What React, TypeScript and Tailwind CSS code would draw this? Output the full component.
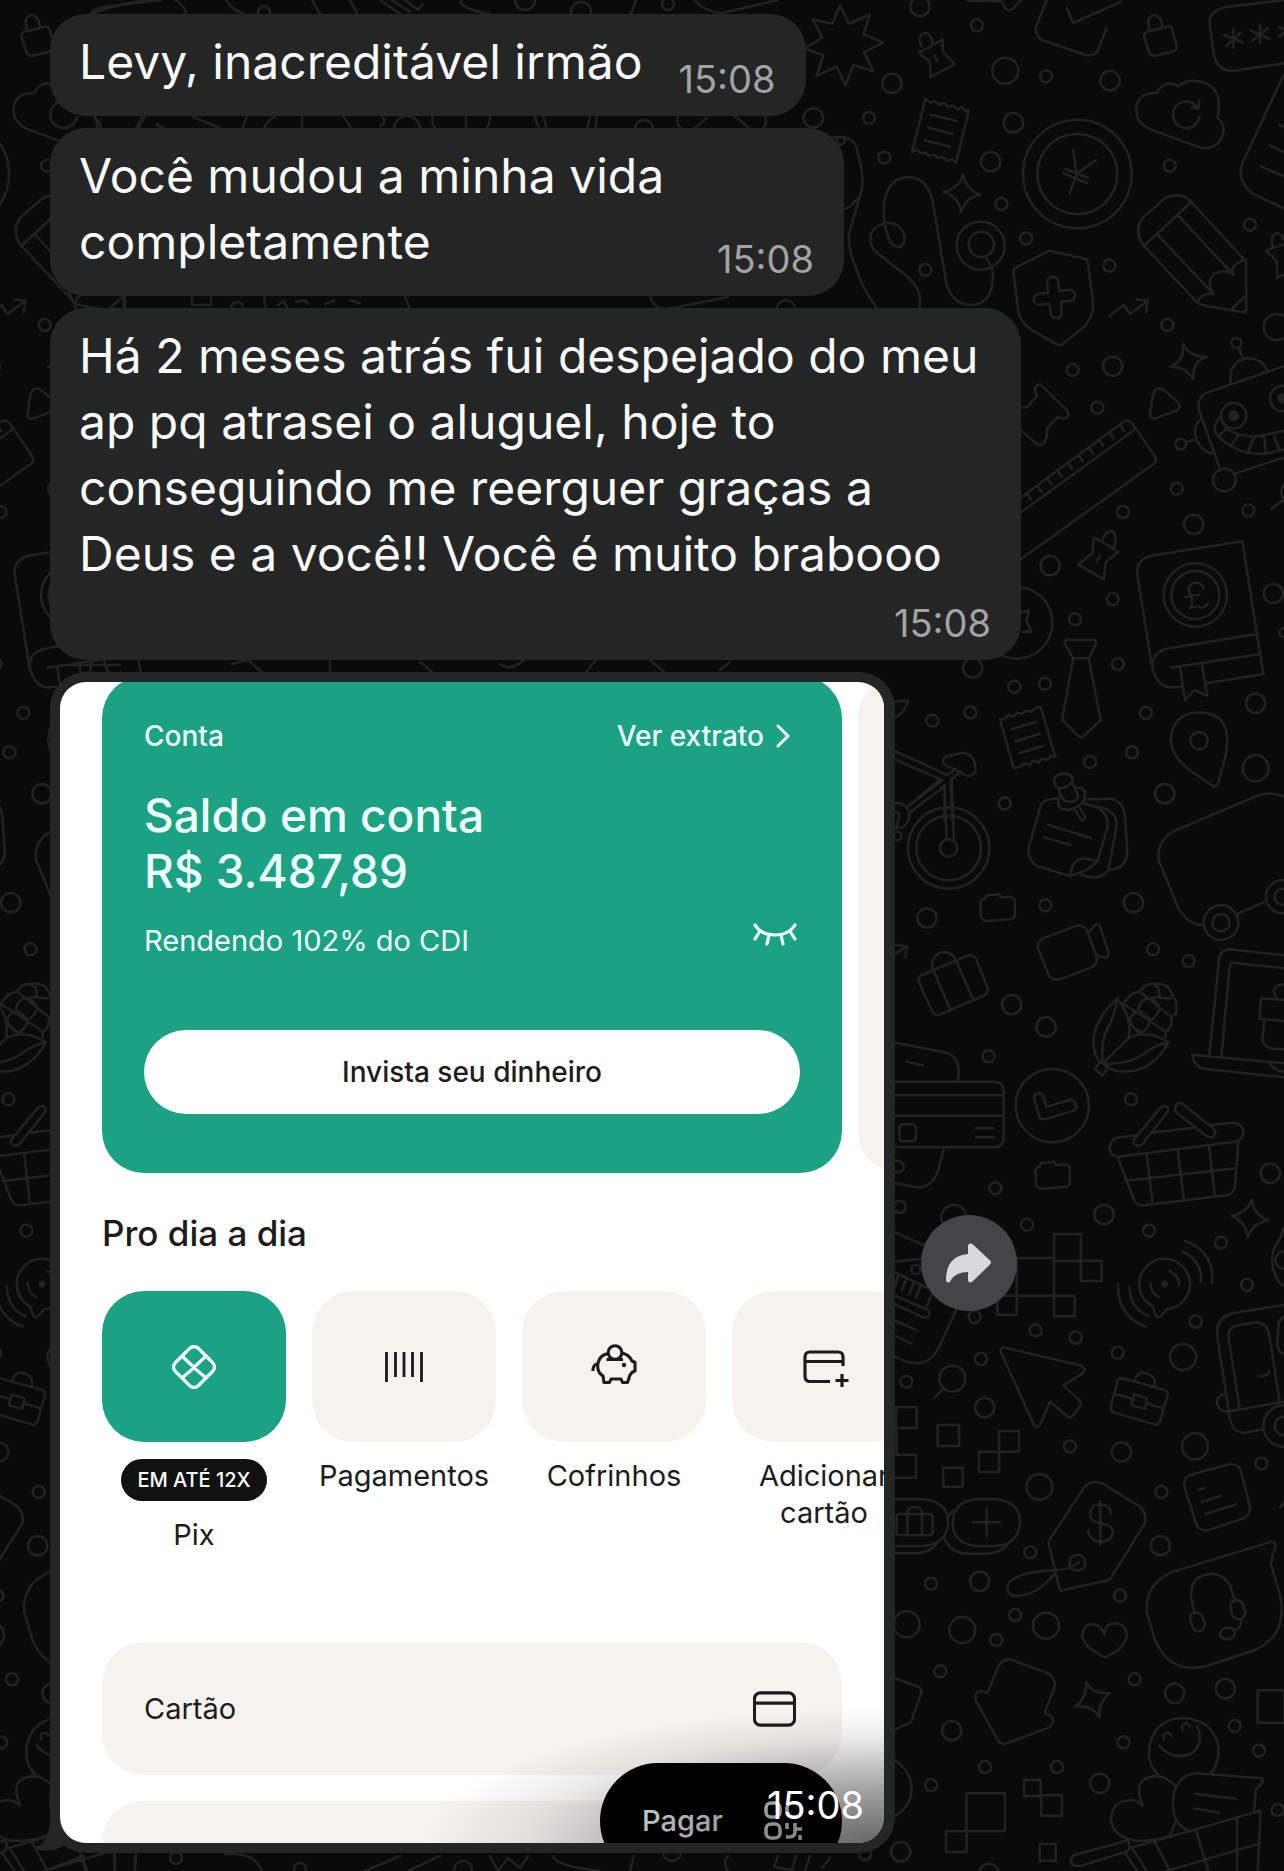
import React from "react";

type Circle = [number, number, number];
type Box = [number, number, number, number];

interface DoodleSection {
    x: number;
    y: number;
    scale: number;
    paths: string[];
    circles: Circle[];
    boxes?: Box[];
    dots?: Circle[];
}

// --- Wallpaper drawings, split in blocks; the motif repeats every 1122.6 units ---
const sections: DoodleSection[] = [
    {
        x: 784,
        y: 0,
        scale: 1 / 3,
        paths: [
            "M168 15L195 72L258 43L238 103L297 127L240 157L268 214L208 195L185 256L158 200L98 228L118 165L62 145L115 113L86 58L145 72Z",
            "M404 158L435 142L475 118L477 155L512 192L440 231L438 185ZM413 140Q398 108 418 100Q440 94 446 130M452 166L462 184",
            "M424 297L440 308L452 303L466 314L480 309L492 320L506 316L520 328L534 322L542 332L555 330L516 488L505 478L490 482L478 472L464 474L450 464L436 468L424 458L410 460L398 450L384 456ZM440 344L518 363M432 382L506 402M422 421L498 440",
            "M538 524Q545 570 590 584Q548 588 531 636Q525 590 478 576Q522 568 538 524Z",
            "M788 0L757 80Q750 105 775 120L905 165Q930 172 942 150L968 83M848 24L868 69L1012 5",
            "M1090 95L1150 80Q1162 78 1165 90L1178 140Q1180 150 1168 154L1112 168Q1100 168 1096 158L1080 110Q1080 98 1090 95ZM1097 92Q1085 50 1108 46Q1130 42 1136 82",
            "M1500 0L1330 20Q1270 30 1278 80L1290 165Q1300 215 1350 212L1500 190M1348 87V143M1320 105L1376 127M1328 137L1370 98M1428 74V130M1400 92L1456 116M1406 122L1452 84M1484 80L1500 90M1486 110L1500 98",
            "M1118 280Q1060 275 1056 330Q1058 370 1100 388L1240 440Q1290 455 1312 415Q1330 375 1300 353Q1320 270 1260 248Q1215 232 1184 259Q1140 235 1118 280ZM1246 352A40 40 0 1 1 1240 322M1246 303L1243 325L1225 322",
            "M1500 222L1375 490Q1358 545 1405 580L1500 626M1486 375L1500 381M1456 436L1500 457M1430 499L1500 529",
            "M867 450L878 522L937 479M878 522L857 579M845 507L914 534M838 520L908 549",
            "M1080 738Q1045 690 1080 650L1140 597Q1185 570 1222 606L1386 785L1387 930Q1386 937 1375 937L1265 917Q1248 915 1240 908ZM1080 738L1222 606M1118 702L1290 883Q1260 835 1300 818Q1330 808 1348 824Q1335 790 1386 780M1182 646L1348 824M1290 883Q1255 875 1240 908M1340 930L1387 886",
            "M148 412Q215 405 220 455Q245 540 230 580L195 700Q190 740 218 810Q235 865 280 927M405 927Q420 875 370 830Q300 775 270 750Q245 710 275 682Q320 655 350 685Q375 720 350 740Q325 745 312 710Q295 655 300 610Q310 540 365 532Q430 525 447 610L485 840Q500 915 565 915Q625 910 627 830Q625 800 606 772M180 628Q205 620 225 590",
            "M796 752L905 777Q912 780 912 790L928 915Q925 960 895 985L835 1033Q828 1037 820 1033L750 995Q705 965 703 935L688 815Q688 806 697 802ZM789 845Q790 832 805 831Q820 830 822 843L826 873L858 869Q873 870 873 886Q872 900 860 902L830 906L833 938Q832 954 818 955Q803 954 800 942L796 911L765 914Q750 912 749 900Q750 885 763 882L793 878Z",
            "M976 948L1020 915L1038 942L1092 902M1058 898L1092 902L1086 936",
            "M1197 1032Q1213 1068 1268 1071Q1222 1085 1229 1139Q1205 1098 1160 1101Q1203 1078 1197 1032Z",
            "M1447 752L1500 732M1447 752L1478 783L1480 833L1500 824M1468 742Q1455 705 1480 700Q1492 700 1497 718",
            "M1376 1075L1364 1042M1340 1150Q1332 1085 1390 1075Q1435 1075 1450 1113M1500 1098L1270 1178Q1235 1195 1245 1230",
            "M1108 1180Q1120 1155 1142 1172L1180 1205Q1195 1222 1178 1232L1115 1255Q1095 1258 1098 1240Z",
            "M700 1225L728 1222L758 1188Q745 1155 770 1153L850 1232Q860 1250 840 1256L820 1252L790 1285Q790 1330 770 1335Q755 1335 700 1280",
            "M550 2L655 4Q662 38 685 28L710 0",
        ],
        circles: [
            [408, 20, 29], [579, 76, 18], [324, 250, 29], [664, 212, 39], [786, 229, 18], [978, 242, 29], [88, 354, 29], [255, 354, 18],
            [688, 368, 29], [301, 473, 18], [620, 485, 29], [652, 612, 18], [726, 715, 18], [424, 810, 18], [1157, 497, 18], [1398, 674, 18],
            [976, 797, 18], [1150, 975, 18], [1478, 981, 39], [866, 1110, 18], [986, 1099, 29], [940, 1223, 18], [880, 522, 163],
            [880, 522, 120], [590, 737, 72], [592, 733, 38], [1357, 1029, 15], [170, 422, 12],
        ],
    },
    {
        x: 784,
        y: 400,
        scale: 1 / 3,
        paths: [
            "M700 300L1015 68Q1030 55 1045 70L1113 170Q1120 182 1108 192L700 485M700 345L1054 88",
            "M1008 76l12 17M977 98l12 17M946 121l12 17M915 144l12 17M884 167l12 17M853 190l12 17M822 213l12 17M791 236l12 17M760 258l12 17M729 281l12 17",
            "M1245 30L1308 208M1352 221L1500 172M1310 50Q1275 85 1310 115Q1370 170 1450 160L1500 148M1325 85Q1370 115 1430 108L1500 92M1330 83L1308 105M1365 105L1340 138M1410 112L1392 155M1440 112L1446 158M1470 108L1486 150M1252 55Q1220 85 1240 125Q1260 160 1285 160M1205 127L1236 118",
            "M1463 327L1500 298M1500 250Q1485 275 1498 298",
            "M930 412L962 430L1003 456L965 487L960 538L882 495L925 460ZM955 420Q965 390 985 394Q1002 402 990 440M948 465L938 485",
            "M700 640L735 632L727 662L742 695L715 695",
            "M1375 424L1438 822L1268 850M1375 424L1110 466Q1055 475 1060 525L1104 800Q1120 865 1165 862L1195 860M1415 703L1155 745Q1105 755 1104 800M1425 763L1160 803M1188 803L1203 900L1232 870L1270 888L1254 795",
            "M1260 565Q1245 540 1222 552Q1208 565 1220 585Q1230 610 1217 625Q1240 615 1250 622Q1262 625 1271 613M1203 592L1246 584",
            "M850 720L930 720Q940 722 936 730L914 775L950 960L898 1010Q892 1014 886 1010L834 960L868 775L842 730Q842 720 850 720ZM868 775L914 775",
            "M647 957L662 957L672 946L688 950L698 938L714 942L726 932L742 936L754 924L770 922L814 1070L800 1068L790 1080L774 1076L764 1088L748 1082L736 1094L722 1090L708 1100L690 1105ZM684 987L756 966M695 1023L767 1002M706 1059L778 1038",
            "M1245 937Q1165 940 1160 1020Q1165 1070 1210 1105L1285 1157Q1298 1162 1303 1147L1325 1065Q1350 940 1245 937Z",
            "M325 1050L490 1125L515 1108M325 1075L470 1138L370 1220M482 1155L482 1260M505 1260L500 1140L530 1115M478 1080Q480 1070 495 1068L535 1058Q575 1062 575 1110Q570 1130 550 1128L495 1100Q475 1095 478 1080M325 905L372 902Q365 935 335 952",
        ],
        circles: [
            [1178, 266, 18], [1017, 336, 18], [1393, 331, 18], [1229, 373, 29], [798, 497, 29], [1468, 580, 29], [986, 598, 18],
            [873, 658, 18], [1002, 792, 18], [783, 851, 18], [691, 860, 18], [566, 804, 29], [1415, 910, 29], [1086, 939, 18],
            [559, 937, 18], [445, 962, 18], [1044, 1057, 18], [918, 1086, 18], [1415, 1105, 39], [1142, 1181, 29], [662, 1210, 18],
            [1500, 698, 14], [1349, 47, 38], [1321, 240, 34], [1190, 132, 16], [1496, -5, 38], [697, 668, 108], [1234, 585, 95],
            [1234, 585, 72], [1245, 1022, 26],
        ],
        dots: [[1349, 47, 16], [1496, -5, 16]],
    },
    {
        x: 880,
        y: 780,
        scale: 1 / 3,
        paths: [
            "M200 180L193 15M222 185L215 0M188 0L80 82M192 20L88 98M40 98Q60 95 58 105L50 140",
            "M535 55L500 60Q485 65 480 85L445 205Q445 245 475 260L570 288Q640 270 655 235L683 140Q685 95 645 80L615 70M570 288Q575 240 610 235L655 243M605 285Q660 305 685 270L710 140Q710 95 670 85L610 70M690 270Q740 265 742 215L735 110Q730 60 690 56L620 58M502 134L632 174M492 172L570 195M587 92L603 120Q615 122 615 110L600 85",
            "M522 8Q520 -15 545 -18Q580 -20 578 0Q570 20 545 25Q525 25 522 8ZM537 30L545 50M578 10L592 40Q600 60 575 65Q550 68 543 45M540 45Q525 80 550 88Q590 95 612 60Q622 35 605 25L590 22",
            "M318 347L358 342L362 352L390 350Q404 352 404 362L405 405Q403 416 390 418L320 423Q306 422 303 410L301 370Q302 358 314 357Z",
            "M483 1150L523 1145L527 1155L555 1153Q569 1155 569 1165L570 1208Q568 1219 555 1221L485 1226Q471 1225 468 1213L466 1173Q467 1161 479 1160Z",
            "M125 585L265 526Q280 523 288 535L323 625Q325 638 315 645L180 703Q165 707 158 697L116 605Q113 592 125 585ZM160 570L210 688M228 542L278 656M160 570Q148 535 180 518Q215 510 228 542",
            "M490 475L590 437Q610 433 620 450L650 530Q655 550 635 562L540 598Q515 603 506 585L474 505Q470 485 490 475ZM627 457L645 435Q655 428 660 440L686 520Q686 534 675 532L650 527",
            "M1212 50Q1170 32 1130 48L885 152Q830 180 836 240L895 385Q925 435 972 435M1068 404L1160 363",
            "M1212 526L1050 508Q1020 508 1017 540L988 824M1212 565L1060 548Q1050 548 1049 560L1024 830M937 824L1212 850M937 824Q940 860 975 867L1212 892M1170 850Q1180 870 1212 876M1212 660L1143 655L1138 717L1212 723M1153 722L1147 780Q1155 805 1180 806L1212 808M1190 655Q1165 620 1212 612",
            "M712 655Q640 720 640 790Q645 840 668 850Q690 875 740 875Q820 870 866 787Q800 745 745 775Q700 820 668 850M712 655Q760 720 745 775M712 655Q705 700 690 730Q660 780 668 850M680 852Q760 850 800 815Q830 795 866 787M668 843L686 858L668 886L644 868L660 846",
            "M728 675Q750 635 780 635Q790 610 820 612Q870 605 878 650Q895 665 888 700Q878 710 873 712Q880 740 856 755L856 772M780 635L870 708M730 672L775 700L850 750M775 690Q780 655 812 655Q840 670 838 690Q825 715 812 720Q795 700 775 690M750 720Q755 695 775 700M750 720Q760 755 785 758Q805 745 812 720M750 735L785 758M820 612Q840 620 838 650Q845 655 870 655M838 650L812 655",
            "M40 787L200 818Q245 835 234 900M80 845L128 856M40 905L345 905Q370 907 371 930L371 1075Q370 1100 345 1102L60 1102Q42 1100 40 1090M40 946H370M40 1007H370M288 1045H342M288 1072H342M192 1104L175 1170Q155 1225 110 1222L40 1208M40 1140Q75 1145 72 1165Q65 1180 40 1176M72 1033H94Q108 1033 108 1047V1070Q108 1084 94 1084H72Q58 1084 58 1070V1047Q58 1033 72 1033Z",
            "M462 955Q460 945 470 942L480 940Q488 940 490 950L500 980L570 960Q580 957 584 965L588 980Q590 988 580 992L495 1018Q482 1020 478 1010Z",
            "M775 1065L720 1072Q695 1075 690 1095Q685 1125 712 1130L760 1255Q768 1278 790 1276L1040 1246Q1065 1240 1065 1215L1075 1085M815 1058L940 1043M990 1035L1060 1028Q1088 1030 1090 1055Q1090 1080 1065 1085L712 1130M800 1122L818 1272M893 1110L912 1262M987 1098L1005 1250M735 1203L1068 1164",
            "M762 1078L840 985Q850 972 862 982Q868 990 860 1000L790 1088Q778 1103 764 1094Q758 1086 762 1078ZM885 990Q885 965 905 970L1000 1045Q1012 1060 1000 1070Q990 1075 980 1068L890 998Z",
            "M40 525L80 500M48 494L82 500L76 532",
        ],
        circles: [
            [374, 70, 18], [854, 41, 29], [141, 414, 29], [496, 376, 18], [760, 368, 29], [819, 508, 18], [926, 543, 18],
            [395, 674, 29], [498, 741, 29], [326, 829, 18], [753, 958, 18], [1171, 1180, 29], [346, 1225, 18], [206, 204, 122],
            [206, 204, 97], [206, 204, 26], [50, 107, 38], [52, 168, 13], [1023, 428, 52], [1023, 428, 26], [1208, 350, 50],
            [1208, 350, 24], [517, 977, 110],
        ],
    },
    {
        x: 880,
        y: 1180,
        scale: 1 / 3,
        paths: [
            "M50 744V824M190 625L163 655",
            "M1115 60Q1123 108 1166 120Q1120 128 1103 171Q1098 125 1054 107Q1100 100 1115 60Z",
            "M818 380Q778 356 778 313A76 76 0 1 1 860 388L842 408Q834 415 828 408ZM915 183Q1005 215 996 310M907 215Q970 245 962 305M869 273Q898 285 897 316M811 310Q812 340 837 352M748 320Q750 385 805 408M713 312Q715 410 796 440",
            "M1212 140Q1205 165 1195 185Q1170 215 1178 260Q1190 310 1212 318",
            "M1212 375L1065 398Q1005 410 1012 470L1050 720Q1060 760 1095 758L1150 748M1212 665L1043 695M1079 686L1045 470Q1045 440 1075 436L1130 427Q1160 430 1167 460L1199 665M1138 589Q1165 588 1167 576M1212 410Q1195 420 1195 440L1192 490Q1195 520 1212 522M1037 640Q1005 650 1012 675Q1020 695 1043 695",
            "M375 503L605 557Q620 568 608 580L550 617L600 662Q606 670 600 678L575 710Q567 715 560 708L510 665L480 735Q470 745 462 735L362 515Q362 500 375 503Z",
            "M725 594L855 630Q865 635 863 645L840 725Q835 735 825 734L700 697Q690 690 692 680L712 605Q715 595 725 594ZM706 643L760 657M798 670L850 685M762 643L802 655L795 687L755 676ZM765 600Q775 570 800 580Q830 590 824 618",
            "M40 155L130 195M40 245L122 237M40 275L140 322M40 345L145 390Q150 400 145 410Q138 415 130 412L40 372M55 285L45 320M80 295L65 330M102 305L88 342M122 315L107 355M155 345L140 378M40 420L112 452M40 465L95 491M228 390L180 495Q155 550 110 550Q75 548 40 528",
            "M930 885L1050 852Q1072 850 1082 870L1110 980Q1112 1005 1090 1015L985 1050Q960 1055 950 1035L913 920Q910 895 930 885ZM955 930L976 923M966 966L1023 947M976 1002L1068 973M1200 982L1212 968",
        ],
        circles: [
            [59, 81, 18], [222, 113, 38], [441, 134, 18], [672, 104, 29], [807, 152, 18], [1023, 188, 18], [1101, 315, 18],
            [108, 269, 14], [284, 411, 18], [467, 451, 18], [587, 473, 18], [713, 518, 18], [909, 531, 39], [947, 425, 18],
            [303, 537, 18], [79, 605, 18], [314, 683, 29], [570, 799, 18], [724, 816, 29], [945, 799, 39], [1144, 851, 18],
            [478, 921, 39], [844, 936, 18], [217, 596, 39], [1212, 240, 26], [1212, 738, 62], [1212, 738, 28],
        ],
        boxes: [
            [522, 162, 81, 81], [603, 242, 62, 61], [410, 234, 112, 113], [352, 347, 58, 57], [522, 347, 62, 62], [48, 682, 62, 62],
            [173, 735, 64, 63], [357, 753, 60, 62], [297, 815, 60, 61], [40, 824, 68, 69], [190, 863, 58, 57],
        ],
        dots: [[854, 313, 10]],
    },
    {
        x: 880,
        y: 1520,
        scale: 1 / 3,
        paths: [
            "M40 -62H130Q205 -55 205 10Q200 70 130 78H40M40 100H110Q150 98 170 72M288 -62H350Q420 -55 420 8Q415 72 350 78H288Q218 70 218 8Q220 -55 288 -62ZM192 55Q215 100 260 101H320Q360 100 385 72M203 -10L220 -28",
            "M60 -18H148Q158 -18 158 -8V36Q158 46 148 46H60Q50 46 50 36V-8Q50 -18 60 -18ZM82 46V-18Q82 -38 100 -38H108Q126 -38 126 -18V46M278 7H362M320 -35V50",
            "M505 65L610 -95Q635 -125 670 -108L780 -40Q800 -20 795 10L688 180L540 212ZM597 127Q570 150 525 150Q420 155 390 185Q370 215 400 228Q470 230 525 160",
            "M661 -57V75M693 -20Q690 -45 661 -47Q632 -45 630 -20Q630 5 661 10Q698 15 699 35Q695 65 661 66Q628 62 625 32",
            "M1175 65Q1190 65 1186 80L1172 130L1200 225Q1225 345 1125 390L980 438Q870 465 825 360L800 275Q795 190 880 155Z",
            "M944 275Q915 190 965 168Q1020 148 1050 195L1065 242M1083 300Q1085 325 1065 330",
            "M940 278Q930 282 930 295L937 320Q943 336 958 334Q974 330 974 312L967 290Q958 274 940 278ZM1062 242Q1050 247 1051 262L1057 285Q1065 300 1080 298Q1096 293 1096 276L1088 252Q1078 236 1062 242ZM1035 325Q1019 330 1020 345Q1025 358 1042 358Q1062 354 1065 342Q1062 318 1035 325Z",
            "M673 345Q675 310 705 310Q742 315 740 350Q730 390 675 412Q615 385 607 350Q608 312 640 312Q668 318 673 345Z",
            "M355 440Q370 410 400 422L500 458Q530 475 523 505L493 580Q520 585 520 605Q515 620 500 625L380 670Q362 675 353 660L287 540Q283 515 300 513L322 519Z",
            "M619 488Q640 525 690 519Q655 545 658 592Q640 555 586 558Q620 535 619 488Z",
            "M40 473L110 498Q128 505 122 525L92 607L40 632M40 718Q95 755 95 805Q95 860 40 892",
            "M835 765Q800 730 808 680Q825 595 910 594Q1000 600 1015 680Q1020 725 993 760M852 658Q845 640 862 638Q872 640 874 648M908 630Q902 612 916 610Q928 612 930 622M951 618Q975 670 935 700Q880 725 837 676",
            "M788 857Q765 800 790 780Q840 750 885 798M788 857Q765 835 735 842Q690 855 693 905Q705 955 770 962Q830 965 872 945L888 900",
            "M950 760L1145 775Q1152 780 1145 790L1127 810L1122 872M950 760Q890 765 880 830Q870 910 930 935M945 821L1068 836M942 865L1018 878",
            "M740 962L585 1005Q570 1012 573 1028Q580 1040 600 1038L740 995Q752 985 748 975Q745 962 740 962M748 985L1142 872L1133 1053M735 1000L772 1053M757 985L800 1053M825 968L870 1053M948 932L985 1053M1071 895V1053M860 1053L1140 970",
        ],
        circles: [
            [451, 97, 18], [153, 191, 18], [299, 184, 29], [841, 77, 29], [720, 227, 18], [405, 285, 18], [498, 317, 39], [80, 313, 39],
            [247, 330, 39], [349, 360, 18], [181, 454, 18], [764, 478, 18], [884, 520, 29], [1036, 506, 29], [1064, 618, 18],
            [731, 667, 18], [215, 632, 29], [1137, 692, 18], [315, 741, 18], [531, 741, 18], [153, 795, 18], [659, 790, 29],
            [1193, 870, 18], [62, 995, 29], [327, 1060, 29], [592, 128, 24],
        ],
        boxes: [
            [1133, 511, 80, 97], [432, 780, 50, 48], [484, 826, 62, 61], [259, 820, 116, 114], [198, 934, 62, 62], [479, 972, 48, 50],
        ],
    },
    {
        x: 0,
        y: 0,
        scale: 1,
        paths: [
            "M93 14Q100 8 152 -1M172 -2Q186 6 186 14M226 0Q232 10 244 14M312 0L320 14M350 0L357 14M380 0L400 14M392 0L410 12M405 0L418 10L423 4M461 0Q458 8 490 14M636 0L631 14M694 0Q705 12 722 13L778 0",
            "M95 116L98 129M145 116L138 129M157 124L166 129M193 117L220 128M247 116L242 129M275 116Q265 123 264 129M302 116V129M343 116L352 129M382 116Q388 122 380 126M433 116Q430 122 436 129M466 116V129M490 116Q490 124 486 129M535 116Q536 124 540 129M543 116L547 129M590 116L587 129M597 116L595 129M678 116Q675 124 682 129M707 118L693 129M735 116L750 129M765 116Q768 125 762 129",
            "M60 270L76 309M125 297V309M192 297V305H211V297M264 297L266 309M278 305L284 301L288 309M296 302L304 300L308 304M325 304L334 301M350 300L360 303M405 297L410 309M650 297Q655 312 672 308L728 297",
            "M70 665H120M92 660L90 672M104 660L108 672M232 664L248 660L262 672M330 660V672M420 662L432 672M500 664Q510 672 524 660M586 672L596 660M650 660L664 672M720 670L730 662",
            "M52 1868L84 1856M82 1856L87 1871M115 1856V1871M135 1856V1871M225 1854Q255 1852 262 1871M365 1871L400 1856M408 1871L440 1856M490 1856L498 1871L508 1858L520 1868L528 1856M553 1856Q555 1866 600 1871M630 1871L634 1856M728 1871Q722 1862 728 1856M778 1856L774 1867L792 1870L796 1856M810 1856L805 1870M822 1868L830 1858",
        ],
        circles: [
            [264, 12, 6], [525, 0, 10], [668, 4, 6], [581, 12, 10], [407, 129, 13], [644, 129, 9], [237, 308, 6], [786, 309, 9],
            [176, 1858, 6], [300, 1869, 6], [463, 1870, 9], [672, 1852, 9], [865, 1854, 6],
        ],
    },
];

function Section({ section }: { section: DoodleSection }) {
    const { x, y, scale, paths, circles, boxes = [], dots = [] } = section;
    return (
        <g transform={`translate(${x} ${y}) scale(${scale})`} strokeWidth={2.5 / scale}>
            {paths.map((d) => <path key={d} d={d} />)}
            {circles.map(([cx, cy, r]) => <circle key={`${cx}-${cy}-${r}`} cx={cx} cy={cy} r={r} />)}
            {boxes.map(([bx, by, w, h]) => <rect key={`${bx}-${by}`} x={bx} y={by} width={w} height={h} />)}
            {dots.map(([cx, cy, r]) => <circle key={`dot-${cx}`} cx={cx} cy={cy} r={r} fill="#222222" stroke="none" />)}
        </g>
    );
}

function Wallpaper() {
    return (
        <svg
            width="1284"
            height="1871"
            viewBox="0 0 1284 1871"
            className="absolute left-0 top-0 max-w-none"
            fill="none"
            stroke="#222222"
            strokeLinecap="round"
            strokeLinejoin="round"
            aria-hidden="true"
        >
            <g id="doodles">
                {sections.map((s) => <Section key={`${s.x}-${s.y}`} section={s} />)}
            </g>
            <use href="#doodles" x="-1122.6" />
        </svg>
    );
}

interface BubbleProps {
    className?: string;
    children: React.ReactNode;
}

function Bubble({ className = "", children }: BubbleProps) {
    return (
        <div className={`relative flex w-fit justify-between rounded-[36px] bg-[#242625] pb-[21px] pl-[29px] pr-[30px] pt-[15px] text-[48px] leading-[66px] text-[#fafafa] ${className}`}>
            {children}
        </div>
    );
}

function Time() {
    return <time className="self-end text-[38px] leading-8 text-[#a3a4a3]">15:08</time>;
}

// --- Ícones ---
function ClosedEyeIcon() {
    return (
        <svg width="44" height="24" viewBox="0 0 44 24" fill="none" stroke="currentColor" strokeWidth="3.2" strokeLinecap="round" strokeLinejoin="round">
            <path d="M2 2Q8 12 22 12Q36 12 42 2M7 8L2 16M16 12L14 21M28 12L30 21M37 8L42 16" />
        </svg>
    );
}

function PixIcon() {
    return (
        <svg width="44" height="44" viewBox="0 0 44 44" fill="none" stroke="#f0fffb" strokeWidth="3.2" strokeLinejoin="round">
            <path d="M17.5 3.5Q22 -0.5 26.5 3.5L40.5 17.5Q44.5 22 40.5 26.5L26.5 40.5Q22 44.5 17.5 40.5L3.5 26.5Q-0.5 22 3.5 17.5Z" />
            <path d="M10.5 11.5L20 20.500Q22 22 24 20.500L33.500 11.500M10.500 32.500L20 24.500Q22 22 24 24.500L33.500 32.500" />
        </svg>
    );
}

function BarcodeIcon() {
    return (
        <svg width="38" height="32" viewBox="0 0 38 32" stroke="#1c1c1c" strokeWidth="2.8">
            <path d="M1.5 1V31M10.5 1V26M19 1V26M27.5 1V26M36.5 1V31" />
        </svg>
    );
}

function PiggyIcon() {
    return (
        <svg width="46" height="42" viewBox="0 0 46 42" fill="none" stroke="#1c1c1c" strokeWidth="3.1" strokeLinejoin="round" className="mb-1">
            <path d="M17 9.500Q9 11 7 19Q6 25 8.500 29L12 32L13 38.500H18.500L20 35H30L31.500 38.500H36.500L39 31L41.500 28L44 27V18.500L41 17Q38 10.500 31 9" />
            <circle cx="24" cy="8.500" r="6.800" />
            <path d="M15.500 15.500H32M7 20Q2 20 1.800 27" />
            <circle cx="33" cy="21" r="2.200" fill="#1c1c1c" stroke="none" />
        </svg>
    );
}

function AddCardIcon() {
    return (
        <svg width="46" height="38" viewBox="0 0 46 38" fill="none" stroke="#1c1c1c" strokeWidth="3.2" className="ml-1 mt-1">
            <path d="M27 31.5H7Q2 31.5 2 26.5V7Q2 2 7 2H35Q40 2 40 7V16M2 11.5H40M39 24V37M32.5 30.5H45.500" />
        </svg>
    );
}

function CardIcon() {
    return (
        <svg width="43" height="36" viewBox="0 0 44 36" fill="none" stroke="#1c1c1c" strokeWidth="3.2">
            <rect x="1.5" y="1.5" width="41" height="33" rx="6" />
            <path d="M2 12H42" />
        </svg>
    );
}

function QrIcon() {
    return (
        <svg width="40" height="40" viewBox="0 0 40 40" fill="none" stroke="currentColor" strokeWidth="3.6">
            <rect x="2" y="2" width="14" height="14" rx="5" />
            <rect x="23" y="2" width="14" height="14" rx="5" />
            <rect x="2" y="23" width="14" height="14" rx="5" />
            <path d="M23 22V28M31 22V31Q31 36 25 36H22M31 28H38M36 34V39" />
        </svg>
    );
}

interface ShortcutProps {
    icon: React.ReactNode;
    label: string;
    badge?: string;
    active?: boolean;
}

function Shortcut({ icon, label, badge, active }: ShortcutProps) {
    return (
        <button type="button" className="flex w-[184px] shrink-0 flex-col items-center">
            <span className={`flex h-[151px] w-full items-center justify-center rounded-[42px] ${active ? "bg-[#1ba283]" : "bg-[#f6f3ef]"}`}>
                {icon}
            </span>
            {badge && (
                <span className="mt-[17px] rounded-full bg-[#101211] px-4 text-[20px] font-medium leading-[42px] whitespace-nowrap text-white">{badge}</span>
            )}
            <span className="mt-[15px] text-[29px] leading-[37px]">{label}</span>
        </button>
    );
}

function BankScreen() {
    return (
        <div className="relative h-[1161px] overflow-hidden rounded-[26px] bg-white px-[42px] text-[#1c1c1c]">
            {/* --- Conta --- */}
            <div className="-mt-[6px] flex gap-4">
                <section className="w-[740px] shrink-0 rounded-[42px] bg-[#1ba283] px-[42px] pb-[59px] pt-[42px] text-[#f0fffb]">
                    <div className="flex items-center justify-between pr-[10px] text-[28px] font-medium leading-9">
                        <h2>Conta</h2>
                        <a href="#extrato" className="flex items-center gap-3">
                            Ver extrato
                            <svg width="14" height="24" viewBox="0 0 14 24" fill="none" stroke="currentColor" strokeWidth="3" strokeLinecap="round" strokeLinejoin="round">
                                <path d="M2 2L12 12L2 22" />
                            </svg>
                        </a>
                    </div>
                    <p className="mt-[33px] text-[46px] font-medium leading-[56px]">
                        Saldo em conta
                        <br />
                        R$ 3.487,89
                    </p>
                    <div className="mt-6 flex items-start justify-between text-[29px] leading-9">
                        <p>Rendendo 102% do CDI</p>
                        <button type="button" aria-label="Ocultar saldo" className="mr-[3px] flex">
                            <ClosedEyeIcon />
                        </button>
                    </div>
                    <button type="button" className="mt-[71px] h-[84px] w-full rounded-full bg-white text-[28px] font-medium text-[#1c1c1c]">
                        Invista seu dinheiro
                    </button>
                </section>
                <div className="w-[740px] shrink-0 rounded-[42px] bg-[#f6f3ef]" />
            </div>

            {/* --- Atalhos --- */}
            <h3 className="mt-[38px] text-[35px] font-medium leading-[44px]">Pro dia a dia</h3>
            <div className="mt-9 flex items-start gap-[26px]">
                <Shortcut icon={<PixIcon />} label="Pix" badge="EM ATÉ 12X" active />
                <Shortcut icon={<BarcodeIcon />} label="Pagamentos" />
                <Shortcut icon={<PiggyIcon />} label="Cofrinhos" />
                <Shortcut icon={<AddCardIcon />} label="Adicionar cartão" />
            </div>

            <button type="button" className="mt-[89px] flex h-[133px] w-[740px] items-center justify-between rounded-[42px] bg-[#f6f3ef] px-[42px] text-[29px]">
                Cartão
                <span className="mr-1"><CardIcon /></span>
            </button>
            <div className="mt-[26px] h-[133px] w-[740px] rounded-[42px] bg-[#f6f3ef]" />

            {/* botão flutuante, cortado pela borda da foto */}
            <button type="button" className="absolute -bottom-[36px] right-[42px] flex h-[116px] w-[242px] items-center justify-between rounded-full bg-black pl-[42px] pr-[38px] text-[29px] font-medium text-white">
                Pagar
                <QrIcon />
            </button>
            <div className="pointer-events-none absolute inset-0 bg-[radial-gradient(ellipse_460px_135px_at_bottom_right,rgba(0,0,0,0.6),rgba(0,0,0,0.36)_40%,rgba(0,0,0,0.08)_78%,transparent)]" />
            <time className="absolute bottom-[22px] right-[20px] text-[38px] leading-8 text-white">15:08</time>
        </div>
    );
}

export default function App() {
    return (
        <main className="relative min-h-screen overflow-hidden bg-[#0a0a0a] pb-[17px] pl-[50px] pt-[14px] font-['Inter',sans-serif]">
            <Wallpaper />
            <div className="flex flex-col gap-3">
                <Bubble className="gap-9">
                    <p>Levy, inacreditável irmão</p>
                    <Time />
                </Bubble>
                <Bubble className="gap-[41px]">
                    <p className="w-[597px]">Você mudou a minha vida completamente</p>
                    <Time />
                </Bubble>
                <Bubble className="max-w-[971px] flex-col gap-5">
                    <p>Há 2 meses atrás fui despejado do meu ap pq atrasei o aluguel, hoje to conseguindo me reerguer graças a Deus e a você!! Você é muito brabooo</p>
                    <Time />
                </Bubble>

                <div className="relative flex items-center gap-[26px]">
                    <div className="relative w-[845px] rounded-[36px] bg-[#242625] py-[10px] pl-[10px] pr-[11px]">
                        <svg width="50" height="40" viewBox="0 0 50 40" className="absolute -left-[18px] bottom-0" fill="#242625" aria-hidden="true">
                            <path d="M18 0V12Q18 28 4 34Q3 36 6 37Q22 40 34 31L50 40V0Z" />
                        </svg>
                        <BankScreen />
                    </div>
                    <button type="button" aria-label="Encaminhar" className="flex size-24 items-center justify-center rounded-full bg-[#444546]">
                        <svg width="46" height="40" viewBox="0 0 46 40" fill="#d9d9db">
                            <path d="M22 11V3Q22 1 23.5 0.5Q25 0 27 1.5L44 17.5Q46 19.5 44 21.5L27 38Q25 40 23.5 39.3Q22 39 22 37V29Q10 29 5 37Q4 39.5 2 39.5Q0 39.5 0 37Q0 13 22 11Z" />
                        </svg>
                    </button>
                </div>
            </div>
        </main>
    );
}
